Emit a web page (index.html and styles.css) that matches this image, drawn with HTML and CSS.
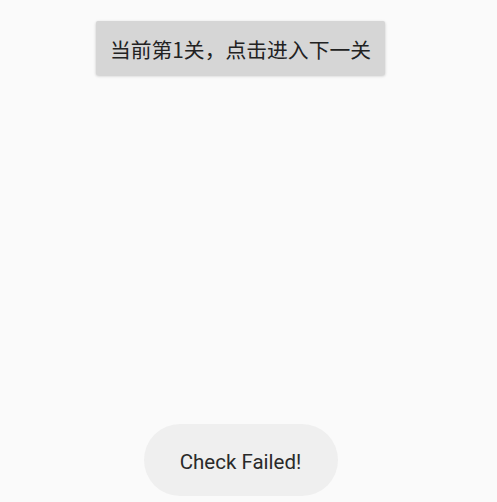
FILE: index.html
```html
<!DOCTYPE html>
<html>
<head>
<meta charset="utf-8">
<link rel="stylesheet" href="styles.css">
</head>
<body>
<div class="screen">
  <button class="level-btn">当前第1关，点击进入下一关</button>
  <div class="toast">Check Failed!</div>
</div>
</body>
</html>
```
FILE: styles.css
```css
html, body {
  margin: 0;
  padding: 0;
  background: #fafafa;
}
.screen {
  height: 502px;
  box-sizing: border-box;
  padding: 21px 16px 6px 0;
  display: flex;
  flex-direction: column;
  align-items: center;
}
.level-btn {
  width: 289px;
  height: 54px;
  border: none;
  border-radius: 2px;
  background: #d6d6d6;
  box-shadow: 0 1px 3px rgba(0,0,0,0.22);
  font-family: "Noto Sans CJK SC", "Noto Sans", sans-serif;
  font-size: 20.8px;
  color: #222;
  padding: 2px 0 0 0;
  display: flex;
  align-items: center;
  justify-content: center;
}
.toast {
  margin-top: auto;
  width: 194px;
  height: 72px;
  box-sizing: border-box;
  padding-top: 3px;
  border-radius: 36px;
  background: #efefef;
  font-family: Roboto, "Noto Sans", sans-serif;
  font-size: 20.5px;
  color: #2a2a2a;
  display: flex;
  align-items: center;
  justify-content: center;
}
```
